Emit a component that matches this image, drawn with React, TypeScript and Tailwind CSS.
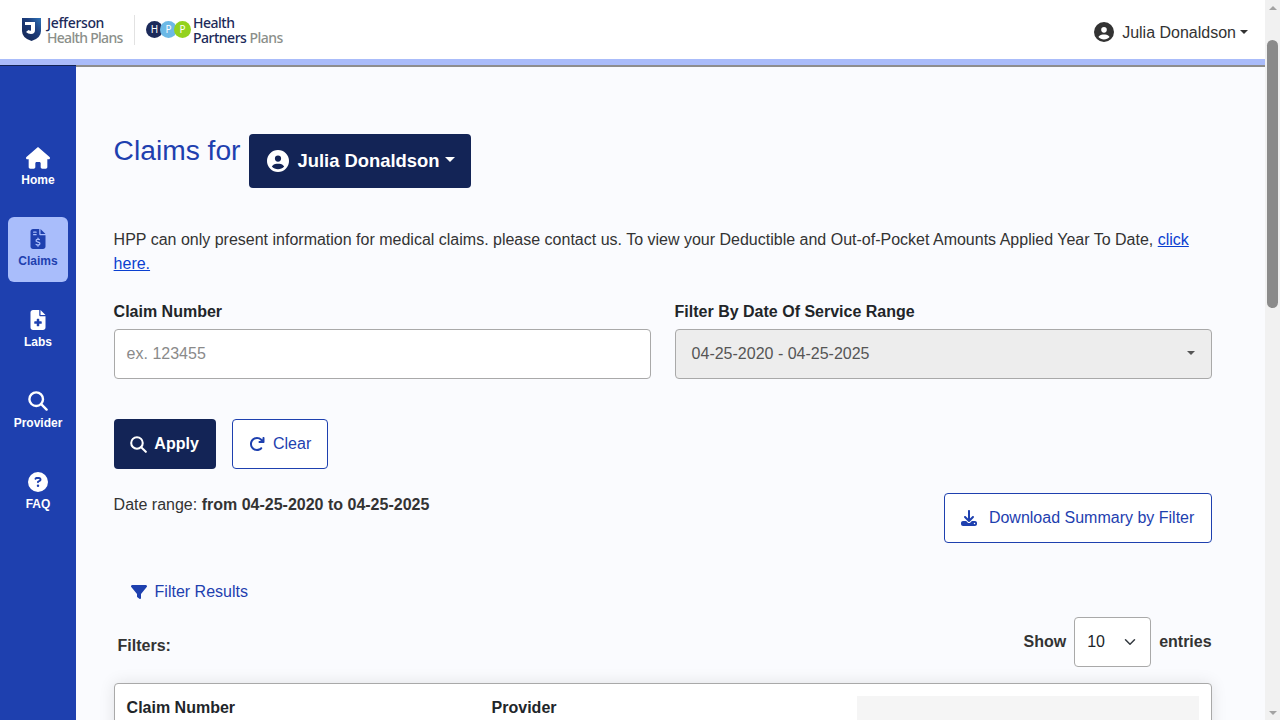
import React from "react";
import { FaHouse, FaFileInvoiceDollar, FaFileMedical, FaCircleQuestion, FaCircleUser, FaArrowRotateRight, FaFilter, FaDownload } from "react-icons/fa6";

const Caret = ({ cls }: { cls: string }) => (
  <span className={`inline-block w-0 h-0 border-x-[4.8px] border-x-transparent border-t-[4.8px] ${cls}`} />
);

const Lens = ({ size }: { size: number }) => (
  <svg width={size} height={size} viewBox="0 0 20 20" fill="none" stroke="currentColor" strokeWidth="2.4" strokeLinecap="round">
    <circle cx="8.2" cy="8.2" r="6.8" />
    <path d="M13.2 13.2L18.6 18.6" />
  </svg>
);

const Nav = ({ icon, label, active }: { icon: React.ReactNode; label: string; active?: boolean }) => (
  <div className={`w-[60px] h-[65px] flex flex-col items-center pt-[11px] rounded-md ${active ? "bg-[#a9bdfb] text-[#1e40af]" : "text-white"}`}>
    <div className="h-[22px] flex items-center justify-center">{icon}</div>
    <div className="text-[12px] leading-[18px] font-bold mt-[2px]">{label}</div>
  </div>
);

const Logos = () => (
  <div className="flex items-center">
    <svg width="19" height="23" viewBox="0 0 19 23" className="mr-[6px]">
      <defs>
        <linearGradient id="sg" x1="0" y1="1" x2="1" y2="0">
          <stop offset="0" stopColor="#14244f" />
          <stop offset="0.6" stopColor="#1c3d7c" />
          <stop offset="1" stopColor="#2f74b8" />
        </linearGradient>
      </defs>
      <path d="M0 0H19V13Q19 20 9.5 23Q0 20 0 13Z" fill="url(#sg)" />
      <path d="M3 4H13V12Q13 16 9 16Q6 16 4 14L6.5 12Q8 13 9 12.5V7H3Z" fill="#fff" />
    </svg>
    <div className="font-['Noto_Sans','Open_Sans',sans-serif] text-[14px] leading-[15px] font-medium w-[77px] whitespace-nowrap">
      <div className="text-[#1c2a5a] tracking-[-0.35px]">Jefferson</div>
      <div className="text-[#8b8f8a] tracking-[-0.7px]">Health Plans</div>
    </div>
    <div className="w-px h-[30px] bg-[#e2e2e2] ml-[10px] mr-[11px]" />
    <div className="flex items-center mr-[2px] font-['Noto_Sans',sans-serif] text-[10px] text-white">
      <span className="w-[17px] h-[17px] rounded-full bg-[#1c2a5a] flex items-center justify-center">H</span>
      <span className="w-[17px] h-[17px] rounded-full bg-[#6cb9e6] flex items-center justify-center ml-[-3px]">P</span>
      <span className="w-[17px] h-[17px] rounded-full bg-[#93d21e] flex items-center justify-center ml-[-3px]">P</span>
    </div>
    <div className="font-['Noto_Sans','Open_Sans',sans-serif] text-[14px] leading-[15px] font-medium tracking-[-0.5px] text-[#1c2a5a] whitespace-nowrap">
      <div>Health</div>
      <div>Partners <span className="text-[#8b8f8a]">Plans</span></div>
    </div>
  </div>
);

export default function App() {
  return (
    <div className="h-screen w-full flex overflow-hidden font-['Liberation_Sans',Arial,sans-serif] text-[16px] text-[#212529]">
      <div className="flex-1 min-w-0 flex flex-col">
        <header className="h-[59px] shrink-0 bg-white flex items-center justify-between pl-[22px] pr-[17px]">
          <Logos />
          <div className="flex items-center text-[#333] mt-[5px]">
            <FaCircleUser className="text-[20px] mr-[8px]" />
            <span className="mt-[1px]">Julia Donaldson</span>
            <Caret cls="border-t-[#333] ml-[4px]" />
          </div>
        </header>
        <div className="h-[6px] shrink-0 bg-[#aabcfa]" />
        <div className="flex-1 min-h-0 flex">
          <aside className="w-[76px] shrink-0 bg-[#1e40af] border-t border-t-[#132456] flex flex-col items-center pt-[70px] gap-[16px]">
            <Nav icon={<FaHouse className="text-[24px]" />} label="Home" />
            <Nav icon={<FaFileInvoiceDollar className="text-[20px]" />} label="Claims" active />
            <Nav icon={<FaFileMedical className="text-[20px]" />} label="Labs" />
            <Nav icon={<Lens size={20} />} label="Provider" />
            <Nav icon={<FaCircleQuestion className="text-[20px]" />} label="FAQ" />
          </aside>
          <main className="flex-1 min-w-0 bg-[#fafbfe] border-t-2 border-t-[#8e8e8e] pl-[37.6px] pr-[53.4px] pt-[67px] overflow-hidden">
            <div className="flex items-start h-[54px]">
              <h1 className="text-[28.2px] leading-[32px] text-[#1e40af] mr-[9px]">Claims for</h1>
              <button className="w-[222px] h-[54px] rounded bg-[#132456] text-white font-bold text-[18.4px] flex items-center pl-[18px]">
                <FaCircleUser className="text-[22px] mr-[8px]" />
                Julia Donaldson
                <span className="inline-block w-0 h-0 border-x-[5.5px] border-x-transparent border-t-[5.5px] border-t-white ml-[5px] mb-[3px]" />
              </button>
            </div>
            <p className="mt-[40px] leading-[24px] text-[#333]">
              HPP can only present information for medical claims. please contact us. To view your Deductible and Out-of-Pocket Amounts Applied Year To Date,{" "}
              <a className="text-[#0a3fd0] underline">click here.</a>
            </p>
            <div className="grid grid-cols-2 gap-x-[24px] mt-[24px]">
              <div>
                <div className="font-bold leading-[24px]">Claim Number</div>
                <div className="mt-[5px] h-[50px] rounded bg-white border border-[#a9a9a9] flex items-center px-[12px] text-[#8a8a8a]">ex. 123455</div>
              </div>
              <div>
                <div className="font-bold leading-[24px]">Filter By Date Of Service Range</div>
                <div className="mt-[5px] h-[50px] rounded bg-[#ededed] border border-[#a9a9a9] flex items-center justify-between pl-[16px] pr-[16px] text-[#555]">
                  <span>04-25-2020 - 04-25-2025</span>
                  <Caret cls="border-t-[#555] mb-[3px]" />
                </div>
              </div>
            </div>
            <div className="flex gap-[16px] mt-[40px]">
              <button className="w-[102px] h-[50px] rounded bg-[#132456] text-white font-bold flex items-center justify-center gap-[7px]">
                <Lens size={17} />
                Apply
              </button>
              <button className="w-[96px] h-[50px] rounded bg-white border border-[#1e40af] text-[#1e40af] flex items-center justify-center gap-[8px] pl-[1px]">
                <FaArrowRotateRight className="text-[16px]" />
                Clear
              </button>
            </div>
            <div className="flex justify-between items-start mt-[24px]">
              <div className="leading-[24px] text-[#333]">Date range: <b>from 04-25-2020 to 04-25-2025</b></div>
              <button className="w-[268px] h-[50px] rounded bg-white border border-[#1e40af] text-[#1e40af] flex items-center justify-center gap-[12px]">
                <FaDownload className="text-[16px]" />
                Download Summary by Filter
              </button>
            </div>
            <div className="flex items-center gap-[8px] pl-[17px] mt-[37px] leading-[24px] text-[#1e40af]">
              <FaFilter className="text-[16px]" />
              Filter Results
            </div>
            <div className="flex justify-between items-start mt-[13px]">
              <div className="font-bold text-[#333] pl-[4px] mt-[17px] leading-[24px]">Filters:</div>
              <div className="flex items-center gap-[8px] font-bold text-[#333]">
                <span>Show</span>
                <div className="w-[77px] h-[50px] rounded bg-white border border-[#a9a9a9] flex items-center justify-between pl-[12px] pr-[14px] font-normal text-[#212529]">
                  <span>10</span>
                  <svg width="12" height="12" viewBox="0 0 16 16" fill="none" stroke="#343a40" strokeWidth="2" strokeLinecap="round" strokeLinejoin="round"><path d="M2 5l6 6 6-6" /></svg>
                </div>
                <span>entries</span>
              </div>
            </div>
            <div className="mt-[16px] h-[200px] rounded bg-white border border-[#a9a9a9] shadow-[0_0_16px_rgba(0,0,0,0.1)] pl-[12px] pr-[12px] pt-[12px] flex">
              <div className="font-bold leading-[24px] w-[365px]">Claim Number</div>
              <div className="font-bold leading-[24px] w-[365px]">Provider</div>
              <div className="flex-1 bg-[#f5f5f5]" />
            </div>
          </main>
        </div>
      </div>
      <div className="w-[15px] shrink-0 bg-[#f1f1f1] flex flex-col items-center">
        <div className="h-[15px] flex items-center justify-center">
          <span className="w-0 h-0 border-x-[4px] border-x-transparent border-b-[4px] border-b-[#a3a3a3]" />
        </div>
        <div className="mt-[25px] w-[11px] h-[268px] rounded-full bg-[#8b8b8b]" />
        <div className="flex-1" />
        <div className="h-[15px] flex items-center justify-center">
          <span className="w-0 h-0 border-x-[4px] border-x-transparent border-t-[4px] border-t-[#a3a3a3]" />
        </div>
      </div>
    </div>
  );
}
